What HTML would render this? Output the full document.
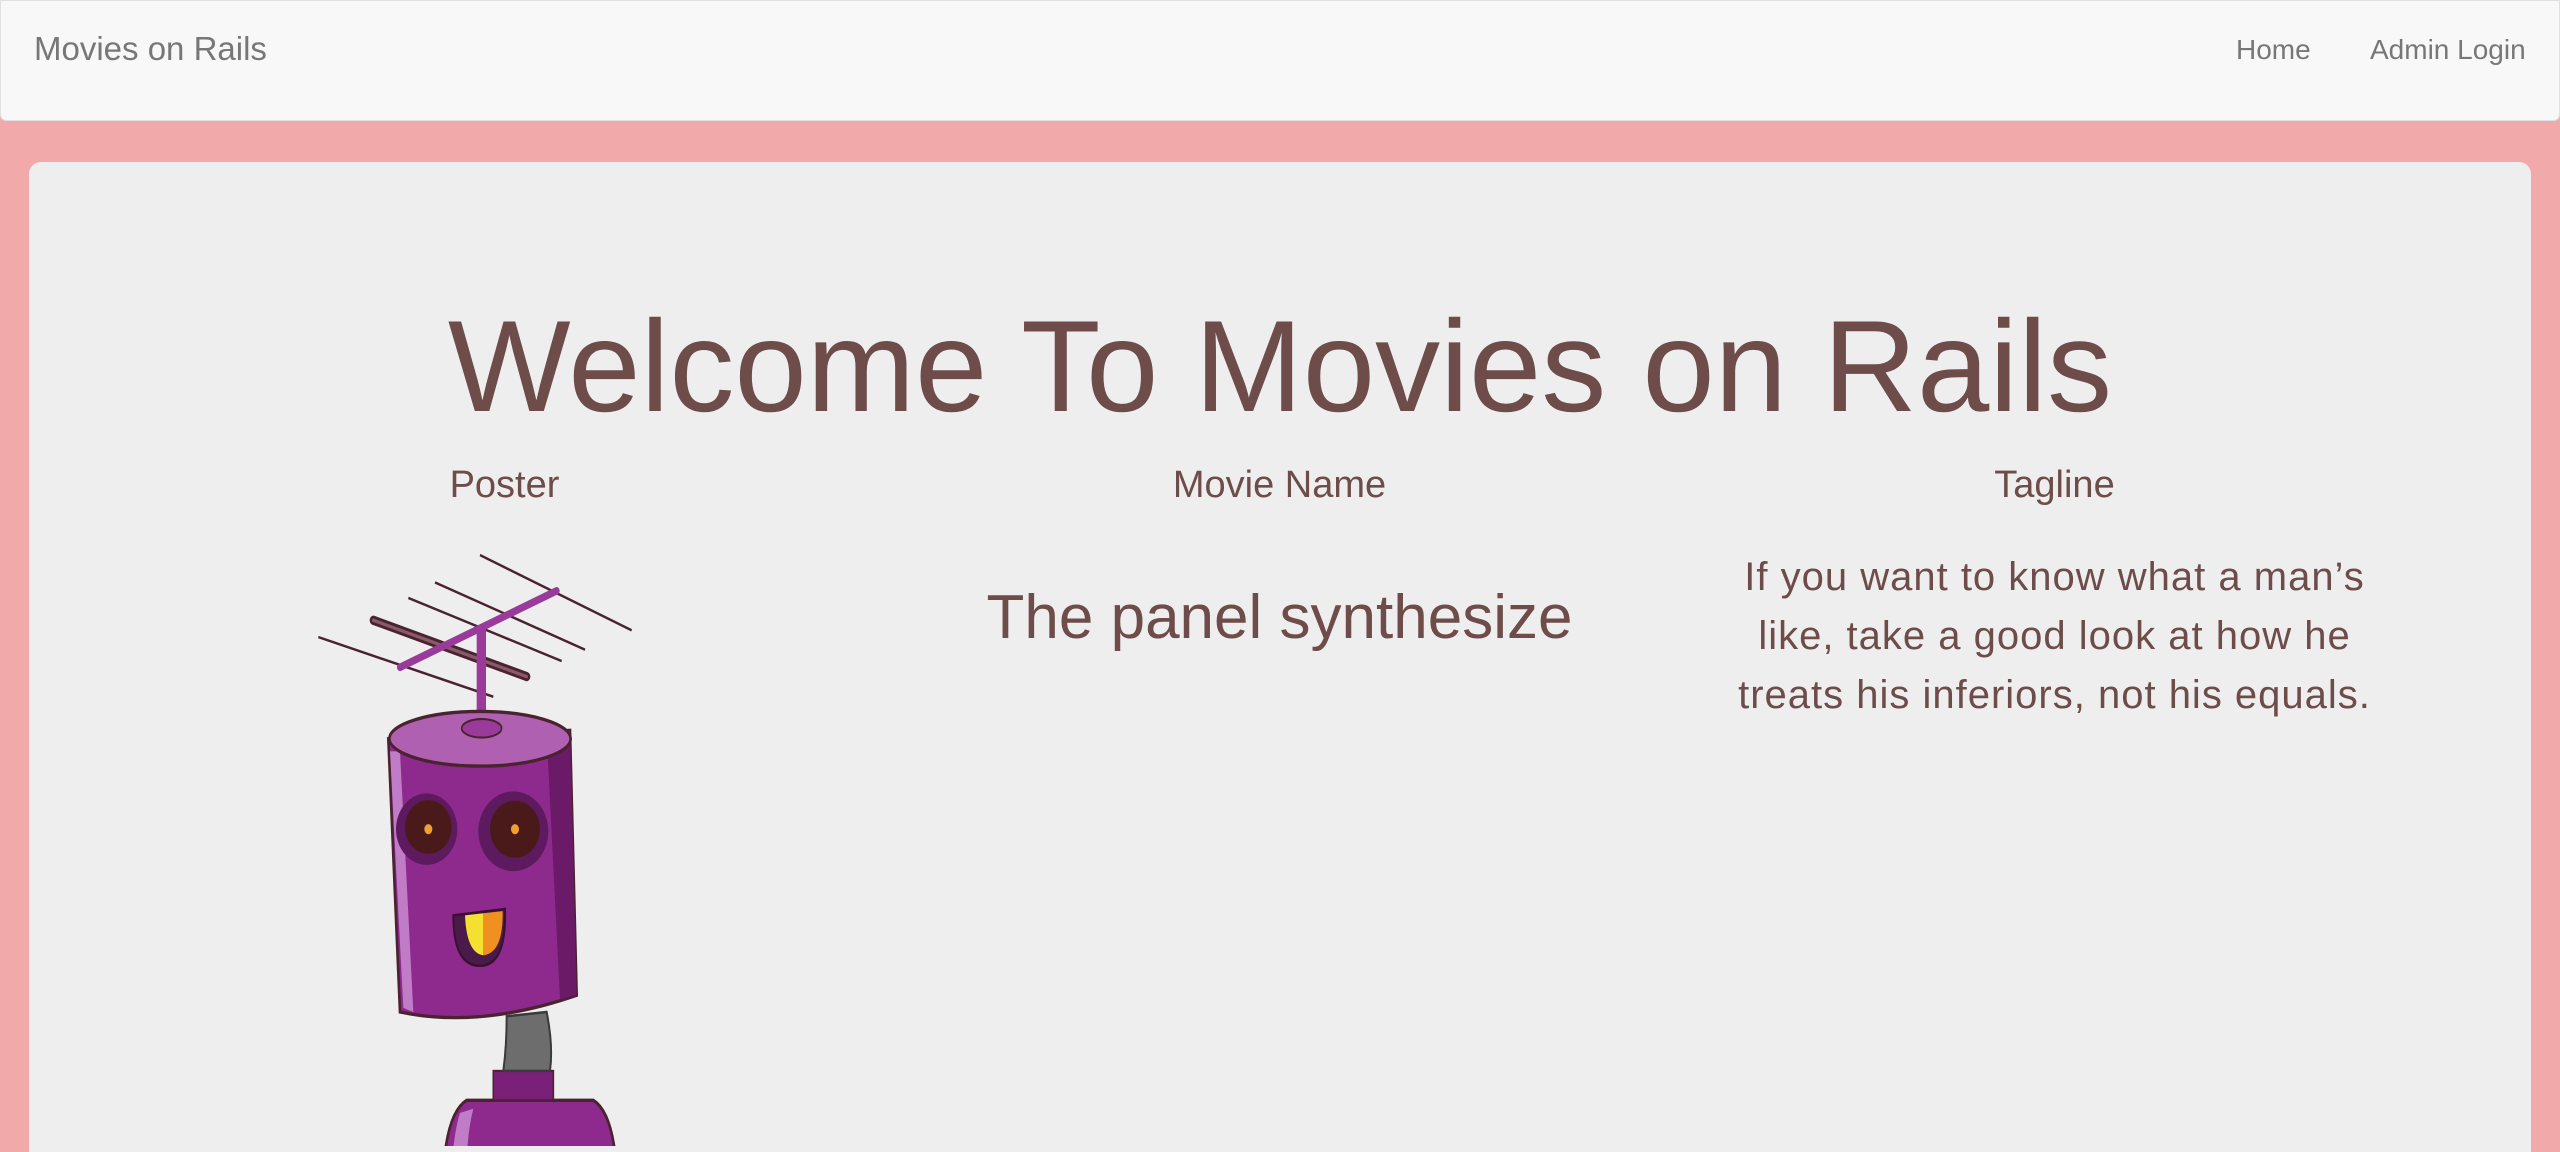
<!DOCTYPE html>
<html><head><meta charset="utf-8"><style>
html,body{margin:0;padding:0;width:2560px;height:1152px;overflow:hidden;}
body{background:#f1a9a9;font-family:"Liberation Sans",sans-serif;position:relative;}
.nav{position:absolute;left:0;top:0;width:2558px;height:119px;background:#f8f8f8;border:1px solid #e0e0e0;border-radius:0 0 6px 6px;}
.brand{position:absolute;left:33px;top:29px;font-size:33px;color:#777;}
.nl{position:absolute;top:33px;font-size:28px;color:#777;}
.jumbo{position:absolute;left:29px;top:162px;width:2502px;height:990px;background:#eeeeee;border-radius:12px 12px 0 0;}
.t{position:absolute;color:#6d4c4a;white-space:nowrap;text-align:center;}
.rb{position:absolute;left:280px;top:516px;width:400px;height:630px;overflow:hidden;}
</style></head><body>
<div class="nav">
<div class="brand">Movies on Rails</div>
<div class="nl" style="left:2235px">Home</div>
<div class="nl" style="left:2369px">Admin Login</div>
</div>
<div class="jumbo"></div>
<div class="t" style="left:0;width:2560px;top:291px;font-size:130px;line-height:150px;">Welcome To Movies on Rails</div>
<div class="t" style="left:117px;width:775px;top:464px;font-size:38px;">Poster</div>
<div class="t" style="left:892px;width:775px;top:464px;font-size:38px;">Movie Name</div>
<div class="t" style="left:1667px;width:775px;top:464px;font-size:38px;">Tagline</div>
<div class="t" style="left:892px;width:775px;top:582px;font-size:62px;">The panel synthesize</div>
<div class="t" style="left:1667px;width:775px;top:548px;font-size:40px;letter-spacing:1px;line-height:59px;white-space:nowrap;">If you want to know what a man’s<br>like, take a good look at how he<br>treats his inferiors, not his equals.</div>
<div class="rb">
<svg style="position:absolute;left:0;top:0" width="400" height="797" viewBox="0 0 1200 1896" preserveAspectRatio="none">
<g stroke="#4a2330" stroke-width="6" fill="none">
<line x1="115" y1="288" x2="640" y2="430"/>
<line x1="385" y1="195" x2="845" y2="345"/>
<line x1="465" y1="158" x2="915" y2="318"/>
<line x1="600" y1="93" x2="1055" y2="272"/>
</g>
<line x1="280" y1="248" x2="740" y2="382" stroke="#4a2330" stroke-width="22" stroke-linecap="round"/>
<line x1="280" y1="248" x2="740" y2="382" stroke="#8a5a6a" stroke-width="8" stroke-linecap="round"/>
<line x1="360" y1="360" x2="830" y2="178" stroke="#9a3a9a" stroke-width="18" stroke-linecap="round"/>
<rect x="590" y="270" width="28" height="240" fill="#9a3a9a"/>
<path d="M560 1390 Q500 1420 490 1560 L1010 1560 Q1000 1420 940 1390 Z" fill="#8e2a8e" stroke="#4a2330" stroke-width="8"/>
<path d="M540 1420 Q520 1470 515 1560 L560 1560 Q560 1470 580 1410Z" fill="#c07cc6"/>
<rect x="640" y="1320" width="180" height="70" fill="#7a2078" stroke="#4a2330" stroke-width="5"/>
<path d="M680 1190 L800 1180 Q820 1260 810 1320 L670 1320 Q680 1260 680 1190Z" fill="#6d6d6d" stroke="#3a3a3a" stroke-width="6"/>
<path d="M325 530 L360 1180 Q600 1220 890 1140 L870 510 Z" fill="#8e2a8e" stroke="#4a2330" stroke-width="8"/>
<path d="M330 560 L370 1170 L400 1180 L360 560Z" fill="#c07cc6"/>
<path d="M800 520 L870 510 L890 1140 L840 1150Z" fill="#6a1a66"/>
<ellipse cx="600" cy="530" rx="272" ry="65" fill="#b060b0" stroke="#4a2330" stroke-width="8"/>
<ellipse cx="605" cy="505" rx="60" ry="22" fill="#9a3a9a" stroke="#4a2330" stroke-width="5"/>
<ellipse cx="440" cy="745" rx="92" ry="85" fill="#5e1a5e"/><ellipse cx="445" cy="740" rx="70" ry="64" fill="#4a1a1a"/><circle cx="445" cy="745" r="12" fill="#f0a030"/>
<ellipse cx="700" cy="750" rx="105" ry="95" fill="#5e1a5e"/><ellipse cx="705" cy="745" rx="75" ry="68" fill="#4a1a1a"/><circle cx="705" cy="745" r="12" fill="#f0a030"/>
<path d="M520 950 L675 935 Q680 1070 600 1070 Q520 1070 520 950Z" fill="#4a1a4a" stroke="#3a1030" stroke-width="6"/>
<path d="M555 950 L610 945 L610 1045 Q560 1040 555 950Z" fill="#f4e030"/>
<path d="M610 945 L668 940 Q670 1040 610 1045Z" fill="#f09020"/>
</svg>
</div>
</body></html>
